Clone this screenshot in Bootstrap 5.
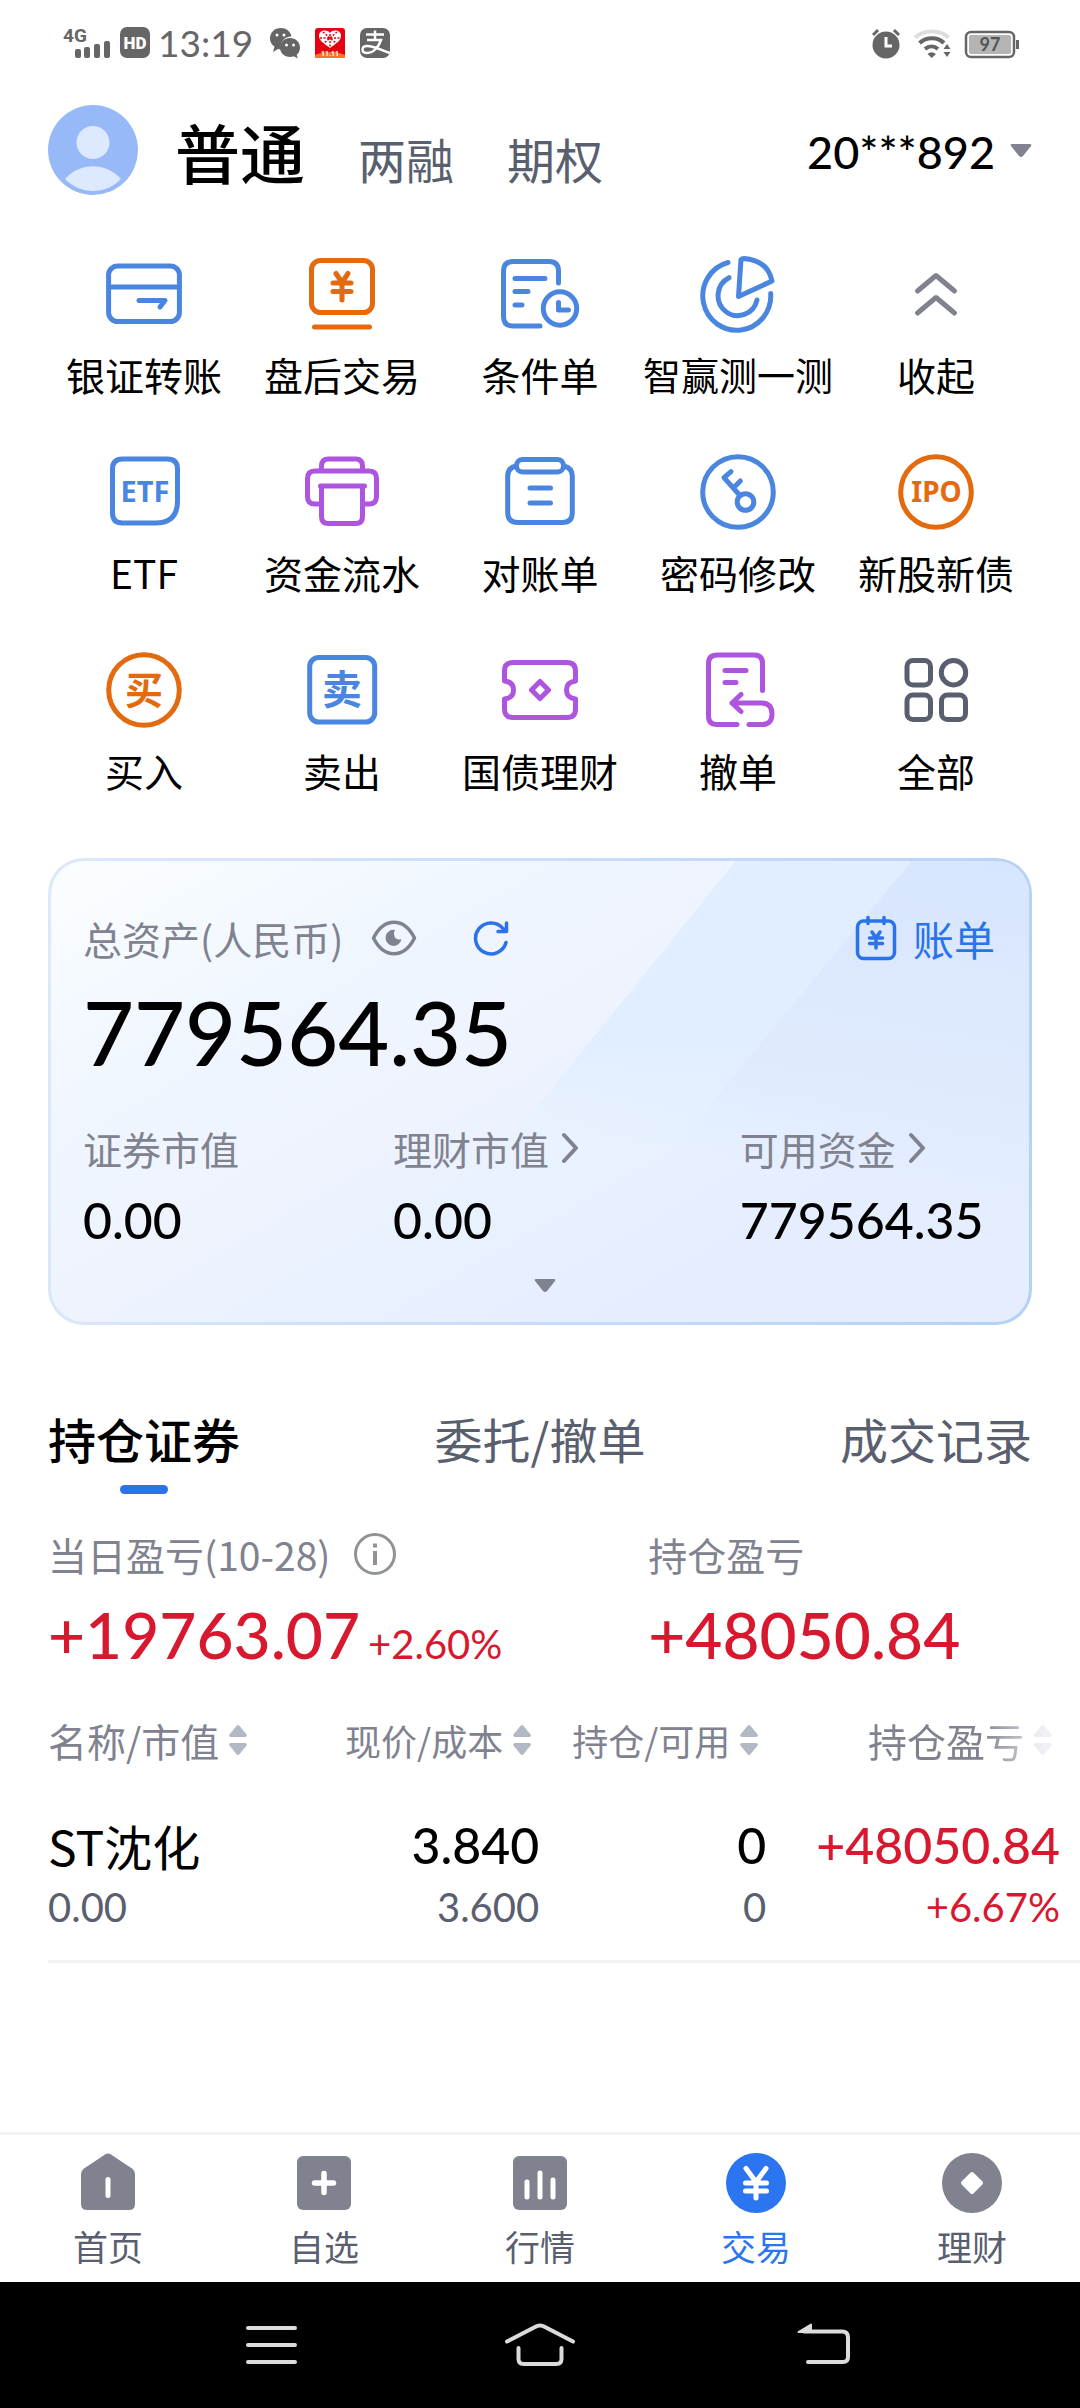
<!DOCTYPE html>
<html lang="zh-CN">
<head>
<meta charset="utf-8">
<meta name="viewport" content="width=device-width, initial-scale=1">
<title>交易</title>
<link href="https://cdn.jsdelivr.net/npm/bootstrap@5.3.0/dist/css/bootstrap.min.css" rel="stylesheet">
<style>
:root{--ink:#000;--slate:#5a5f70;--mute:#80838f;--blue:#2b73ea;--line:#4a86e0;--orange:#e46a10;--purple:#ae55e0;--red:#d7182f}
body{font-family:"Noto Sans CJK SC",sans-serif;font-size:39px;line-height:52px;color:var(--ink);background:#fff}
svg{display:block;flex:none}
a,button{color:inherit;text-decoration:none}
button{border:0;background:none;padding:0;text-align:inherit}
.digits{font-family:Lato,"Noto Sans CJK SC",sans-serif}
.ink-mute{color:var(--mute)}
.ink-slate{color:var(--slate)}
.ink-red{color:var(--red)}
.ic{fill:none;stroke:currentColor;stroke-width:5;stroke-linecap:round;stroke-linejoin:round}
.ic text{fill:currentColor;stroke:none;text-anchor:middle}
.c-line{color:var(--line)}.c-orange{color:var(--orange)}.c-purple{color:var(--purple)}

.statusbar{height:86px;padding:0 60px 0 62px;color:#666}
.clock{font-size:37px;line-height:44px}
.gutter{padding-left:48px;padding-right:48px}
.topbar{padding-top:19px}
.topbar nav{gap:53px;margin-left:37px}
.mode{font-size:48px;line-height:72px;color:var(--slate)}
.mode.active{font-size:65px;font-weight:500;color:var(--ink)}
.account{font-size:45px;line-height:60px;gap:15px;font-weight:500}

.tools{padding:56px 45px 0}
.tool{padding-bottom:49px}
.tool a{gap:13px}
.tool .snug{font-size:38px}

.assets{margin:13px 48px 0;padding:51px 34px 29px;border:3px solid transparent;border-radius:36px;position:relative;overflow:hidden;
 background:linear-gradient(150deg,#fbfeff 0%,#f0f6ff 26%,#eef3fe 46%,#e7f1ff 62%,#e4eeff 76%) padding-box,linear-gradient(100deg,#dce9fa,#b5d0f6) border-box}
.assets::before,.assets::after{content:"";position:absolute;inset:0;z-index:0}
.assets::before{background:linear-gradient(#e0eeff,#e1eeff 40%,rgba(228,238,255,0) 62%);clip-path:polygon(70% 0,100% 0,100% 100%,32% 100%)}
.assets::after{background:linear-gradient(190deg,#d7e6ff,#dfeafd 36%,rgba(228,238,255,0) 56%);clip-path:polygon(88% 0,100% 0,100% 100%,49% 100%)}
.assets>*{position:relative;z-index:1}
.assets>div{margin-left:-2px}
.total{font-size:88px;line-height:104px;margin-top:16px;font-weight:500}
.bill{font-size:41px;color:var(--blue);gap:16px}
.splits{margin-top:38px}
.splits a{gap:13px}
.amt{font-size:50px;line-height:60px;font-weight:500}
.splits .amt{margin-top:16px}
.w-a{width:34%}.w-b{width:38%}.w-c{width:28%}
.more{margin-top:29px;padding-left:12px}

.views{margin-top:81px;font-size:48px;line-height:64px;color:var(--slate)}
.views .active{color:var(--ink);font-weight:500}
.views .active::after{content:"";display:block;width:48px;height:9px;margin:15px auto 0;border-radius:5px;background:var(--blue)}
.pnl{margin-top:34px}
.pnl-a{width:61%}
.pnl-val{font-size:64px;line-height:76px;margin-top:17px;font-weight:500}
.pct{font-size:40px;line-height:40px;font-weight:400}
.holdings{margin-top:41px;padding-left:48px}
.holdings table{table-layout:fixed;border-bottom:3px solid #f2f2f4}
.holdings th{font-weight:400;color:var(--mute);padding:0 8px 49px 0}
.holdings td{padding:0 0 27px;vertical-align:top}
.holdings th:last-child{padding-right:28px}
.holdings td:last-child{padding-right:20px}
.sort{gap:10px}
.tight{font-size:36px}
.fading{-webkit-mask-image:linear-gradient(90deg,#000 62%,rgba(0,0,0,.2) 96%);mask-image:linear-gradient(90deg,#000 62%,rgba(0,0,0,.2) 96%)}
.stock{font-size:48px;line-height:60px}
.sub{font-size:40px;line-height:52px;margin-top:6px}

.tabbar{border-top:3px solid #f2f3f7;padding:18px 0 13px;font-size:35px;line-height:46px;color:var(--slate)}
.tabbar a{gap:10px}
.tabbar svg{color:var(--mute)}
.tabbar .active,.tabbar .active svg{color:#2b76f0}
.syskeys{height:126px;padding:0 21.3%;background:#000;color:#dcdcdc}
</style>
</head>
<body class="d-flex flex-column min-vh-100">

<div class="statusbar d-flex align-items-center justify-content-between">
  <div class="d-flex align-items-center">
    <svg width="92" height="46" viewBox="0 -6 92 46" fill="currentColor" aria-hidden="true">
      <text x="1" y="16" font-family="Roboto,sans-serif" font-weight="700" font-size="19">4G</text>
      <rect x="13" y="23" width="6" height="9" rx="2"/><rect x="22" y="21" width="6" height="11" rx="2"/><rect x="32" y="18" width="6" height="14" rx="2"/><rect x="42" y="15" width="6" height="17" rx="2"/>
      <rect x="58" y="1" width="30" height="31" rx="7"/>
      <text x="73" y="23" font-family="Roboto,sans-serif" font-weight="900" font-size="17" text-anchor="middle" fill="#fff">HD</text>
    </svg>
    <span class="clock digits ms-1 me-3">13:19</span>
    <svg width="124" height="34" viewBox="0 0 124 34" fill="currentColor" aria-hidden="true">
      <path d="M12 2C5 2 1 7 1 12.500c0 3.500 1.500 6 4.500 8L4 26l5-3c1 .3 2 .4 3 .4C10 15 17 10 22.500 10.500 21.500 5 17 2 12 2z"/>
      <path d="M21 12c-5.500 0-10 4-10 9.500S15.500 31 21 31c1.300 0 2.600-.3 3.700-.7l4 2.200-1-3.700c2-1.600 3.300-4 3.300-7.300C31 16 26.500 12 21 12z"/>
      <g fill="#fff"><circle cx="8" cy="9" r="1.500"/><circle cx="15" cy="9" r="1.500"/><circle cx="17.500" cy="19" r="1.500"/><circle cx="24.500" cy="19" r="1.500"/></g>
      <rect x="46" y="2" width="30" height="30" rx="3" fill="#e60012"/>
      <path d="M46 29c9-4 21-4 30 0v3H46z" fill="#f27a2a"/>
      <path d="M61 7c-3-4-11-3-11 3 0 5 6 8 11 12 5-4 11-7 11-12 0-6-8-7-11-3z" fill="#fff"/>
      <path d="M54 6l14 12M68 6L54 18M61 8v13M51 12h20" stroke="#e60012" stroke-width="1.500" stroke-dasharray="2 1.500" fill="none"/>
      <text x="61" y="30" font-family="Roboto,sans-serif" font-weight="700" font-size="7" text-anchor="middle" fill="#fff">11.11</text>
      <rect x="91" y="2" width="30" height="30" rx="7"/>
      <path d="M97 8.500h18M106 4.500v9M98 14h14c-2 6-7 13-14 13-6 0-6-7 0-7 7 0 14 4 23 7" fill="none" stroke="#fff" stroke-width="2.500"/>
    </svg>
  </div>
  <svg width="148" height="34" viewBox="0 0 148 34" aria-hidden="true">
    <circle cx="14" cy="19" r="13.500" fill="#666"/>
    <path d="M14 11v9h6" fill="none" stroke="#fff" stroke-width="3"/>
    <path d="M1 9l5-5M27 9l-5-5" stroke="#666" stroke-width="3"/>
    <g fill="none" stroke="#666" stroke-width="4"><path d="M43 11.500c9-8 25-8 33.500 0" stroke="#ddd"/><path d="M47.500 17c7-6.500 18-6.500 24.500 0"/><path d="M53 23c4-3.500 9-3.500 13 0"/></g>
    <path d="M55.500 28q4-3.500 8.500 0l-4.300 4zM71.500 23l3.500-5 3.500 5zM71.500 26h7l-3.500 5z" fill="#666"/>
    <rect x="94" y="6" width="48" height="25" rx="5" fill="#fff" stroke="#666" stroke-width="2.500"/>
    <rect x="97" y="9" width="42" height="19" rx="2" fill="#b4b4b4"/>
    <rect x="144" y="14" width="3" height="9" fill="#666"/>
    <text x="118" y="25" font-family="Lato,sans-serif" font-weight="700" font-size="18" text-anchor="middle" fill="#555">97</text>
  </svg>
</div>

<header class="topbar gutter d-flex align-items-center">
  <svg width="90" height="90" viewBox="0 0 90 90" role="img" aria-label="头像">
    <circle cx="45" cy="45" r="45" fill="#98b9f8"/><circle cx="45" cy="37.500" r="16.500" fill="#dce9ff"/>
    <path d="M17 74c15-17 41-17 56 0-15 16-41 16-56 0z" fill="#dce9ff"/>
  </svg>
  <nav class="d-flex align-items-baseline pt-2">
    <a href="#" class="mode active">普通</a>
    <a href="#" class="mode">两融</a>
    <a href="#" class="mode">期权</a>
  </nav>
  <button type="button" class="account digits d-flex align-items-center ms-auto pt-1">20***892
    <svg width="22" height="16" viewBox="0 0 22 16" fill="#80838f" aria-hidden="true"><path d="M2 0h18q2 0 1 2l-8 10q-2 2-4 0L1 2q-1-2 1-2z"/></svg>
  </button>
</header>

<section class="tools row row-cols-5 g-0 text-center text-nowrap">
  <div class="col tool"><a href="#" class="d-flex flex-column align-items-center">
    <svg class="ic c-line" width="84" height="84" viewBox="0 0 84 84"><rect x="6.600" y="15" width="70.800" height="55.500" rx="9"/><path d="M7 36h70M37 49.500h26l-5 6.500"/></svg>银证转账</a></div>
  <div class="col tool"><a href="#" class="d-flex flex-column align-items-center">
    <svg class="ic c-orange" width="84" height="84" viewBox="0 0 84 84"><rect x="11.500" y="9.500" width="61" height="52" rx="9"/><path d="M14.500 76h55M36 22.500l6 9 6-9M42 31.500V49M33 32h18M33 40.500h18"/></svg>盘后交易</a></div>
  <div class="col tool"><a href="#" class="d-flex flex-column align-items-center">
    <svg class="ic c-line" width="84" height="84" viewBox="0 0 84 84"><path d="M42 75H15q-9.500 0-9.500-9.500V20q0-9.500 9.500-9.500h36q9.500 0 9.500 9.500v12M17 27.500h30M17 40.500h13M17 54h7M60.500 51.500V59h10"/><circle cx="62" cy="57.500" r="16.700"/></svg>条件单</a></div>
  <div class="col tool"><a href="#" class="snug d-flex flex-column align-items-center">
    <svg class="ic c-line" width="84" height="84" viewBox="0 0 84 84"><path d="M42.500 45.500L45 8.500q1-1 3-1 24 2 28 22.500zM32 11.500A34 34.500 0 1 0 74.700 42.500M33 26.700A19.700 20 0 1 0 61 49"/></svg>智赢测一测</a></div>
  <div class="col tool"><a href="#" class="d-flex flex-column align-items-center">
    <svg class="ic ink-mute" width="84" height="84" viewBox="0 0 84 84"><path d="M23.500 40L42 24.500 60.500 40M23.500 62L42 46.500 60.500 62"/></svg>收起</a></div>

  <div class="col tool"><a href="#" class="d-flex flex-column align-items-center">
    <svg class="ic c-line" width="84" height="84" viewBox="0 0 84 84"><path d="M20.500 10h45q10 0 10 10v32q0 22-22 22h-33q-10 0-10-10V20q0-10 10-10z"/><text x="43" y="53" font-family="'Noto Sans',sans-serif" font-weight="700" font-size="29">ETF</text></svg>ETF</a></div>
  <div class="col tool"><a href="#" class="d-flex flex-column align-items-center">
    <svg class="ic c-purple" width="84" height="84" viewBox="0 0 84 84"><path d="M21.500 22v-5q0-7 7-7h27q7 0 7 7v5M21 55h-6q-7.500 0-7.500-7.500v-18q0-7.500 7.500-7.500h54q7.500 0 7.500 7.500v18q0 7.500-7.500 7.500h-6M20.500 37h44M21.500 37v30.500q0 7 7 7h27q7 0 7-7V37"/></svg>资金流水</a></div>
  <div class="col tool"><a href="#" class="d-flex flex-column align-items-center">
    <svg class="ic c-line" width="84" height="84" viewBox="0 0 84 84"><rect x="18.500" y="10.500" width="47" height="12.500" rx="6"/><path d="M18 17q-8.300 2-8.300 10v36.500q0 10 10 10h44.600q10 0 10-10V27q0-8-8.300-10M32 39h20.500M32 54h20.500"/></svg>对账单</a></div>
  <div class="col tool"><a href="#" class="d-flex flex-column align-items-center">
    <svg class="ic c-line" width="84" height="84" viewBox="0 0 84 84"><circle cx="42" cy="43" r="35.300"/><circle cx="49.500" cy="53" r="8.300"/><path d="M43.500 46L28 28.700l7-6M38.300 38l6-6"/></svg>密码修改</a></div>
  <div class="col tool"><a href="#" class="d-flex flex-column align-items-center">
    <svg class="ic c-orange" width="84" height="84" viewBox="0 0 84 84"><circle cx="42" cy="43" r="35.300"/><text x="42.500" y="53" font-family="'Noto Sans',sans-serif" font-weight="700" font-size="28">IPO</text></svg>新股新债</a></div>

  <div class="col tool"><a href="#" class="d-flex flex-column align-items-center">
    <svg class="ic c-orange" width="84" height="84" viewBox="0 0 84 84"><circle cx="42" cy="43" r="35.300"/><text x="42" y="57" font-family="'Noto Sans CJK SC',sans-serif" font-weight="700" font-size="38">买</text></svg>买入</a></div>
  <div class="col tool"><a href="#" class="d-flex flex-column align-items-center">
    <svg class="ic c-line" width="84" height="84" viewBox="0 0 84 84"><rect x="9.700" y="10.500" width="65" height="64.500" rx="9"/><text x="42" y="57" font-family="'Noto Sans CJK SC',sans-serif" font-weight="700" font-size="40">卖</text></svg>卖出</a></div>
  <div class="col tool"><a href="#" class="d-flex flex-column align-items-center">
    <svg class="ic c-purple" width="84" height="84" viewBox="0 0 84 84"><path d="M15 15.500h54q8.500 0 8.500 8.500v10q-9 1-9 9t9 9v10q0 8.500-8.500 8.500H15q-8.500 0-8.500-8.500V52q9-1 9-9t-9-9V24q0-8.500 8.500-8.500zM42 34.500l8.500 8.500-8.500 8.500-8.500-8.500z"/></svg>国债理财</a></div>
  <div class="col tool"><a href="#" class="d-flex flex-column align-items-center">
    <svg class="ic c-purple" width="84" height="84" viewBox="0 0 84 84"><path d="M41 77.500H21q-8.500 0-8.500-8.500V16.500Q12.500 8 21 8h37q8.500 0 8.500 8.500v27M29 23.500h21M29 35.500h11M45 47.500l-9 8.500 9 8.500M36 56h29q11 0 11 11t-11 10.500H53"/></svg>撤单</a></div>
  <div class="col tool"><a href="#" class="d-flex flex-column align-items-center">
    <svg class="ic ink-slate" width="84" height="84" viewBox="0 0 84 84"><rect x="13" y="13.500" width="23.500" height="24.500" rx="6"/><circle cx="59.500" cy="25.700" r="12.200"/><rect x="13" y="48" width="23.500" height="24.500" rx="6"/><rect x="47.500" y="48" width="24" height="24.500" rx="6"/></svg>全部</a></div>
</section>

<section class="assets">
  <div class="d-flex align-items-center">
    <span class="ink-mute">总资产(人民币)</span>
    <button type="button" class="ink-mute ms-4 ps-1" aria-label="隐藏金额">
      <svg width="46" height="36" viewBox="0 0 46 36"><path d="M2.500 18C13-3 33-3 43.500 18 33 39 13 39 2.500 18z" fill="none" stroke="currentColor" stroke-width="3.500" stroke-linejoin="round"/><path d="M24 10a8 8 0 1 0 6.500 9q-4 1.500-6.500-1.500-2-4 0-7.500z" fill="currentColor"/></svg></button>
    <button type="button" class="ms-5 ps-2" aria-label="刷新">
      <svg width="36" height="36" viewBox="0 0 36 36" fill="none" stroke="#2b73ea" stroke-width="3.500" stroke-linecap="round" stroke-linejoin="round"><path d="M33 22.500A15.500 15.500 0 1 1 30 8.500l2 2M33.500 3v8.500H25"/></svg></button>
    <a href="#" class="bill d-flex align-items-center ms-auto">
      <svg width="42" height="46" viewBox="0 0 42 46" fill="none" stroke="currentColor" stroke-width="3.500" stroke-linecap="round" stroke-linejoin="round"><rect x="2.500" y="6" width="37" height="37.500" rx="6"/><path d="M13 2.500v6M29 2.500v6M17 17l4 6 4-6M21 23v10M14.500 23h13M14.500 28.500h13"/></svg>账单</a>
  </div>
  <div class="total digits">779564.35</div>
  <div class="splits d-flex">
    <div class="w-a"><div class="ink-mute">证券市值</div><div class="amt digits">0.00</div></div>
    <div class="w-b"><a href="#" class="ink-mute d-flex align-items-center">理财市值<svg width="16" height="32" viewBox="0 0 16 32" fill="none" stroke="currentColor" stroke-width="4" stroke-linecap="round" stroke-linejoin="round"><path d="M2 3l12 13L2 29"/></svg></a><div class="amt digits">0.00</div></div>
    <div class="w-c"><a href="#" class="ink-mute d-flex align-items-center">可用资金<svg width="16" height="32" viewBox="0 0 16 32" fill="none" stroke="currentColor" stroke-width="4" stroke-linecap="round" stroke-linejoin="round"><path d="M2 3l12 13L2 29"/></svg></a><div class="amt digits">779564.35</div></div>
  </div>
  <div class="more d-flex justify-content-center"><button type="button" aria-label="展开"><svg width="22" height="14" viewBox="0 0 22 14" fill="#80838f"><path d="M2 0h18q2 0 1 2l-8 10q-2 2-4 0L1 2q-1-2 1-2z"/></svg></button></div>
</section>

<main class="flex-grow-1">
  <nav class="views gutter d-flex justify-content-between">
    <a href="#" class="active">持仓证券</a><a href="#">委托/撤单</a><a href="#">成交记录</a>
  </nav>
  <section class="pnl gutter d-flex">
    <div class="pnl-a">
      <div class="ink-mute d-flex align-items-center">当日盈亏(10-28)
        <svg class="ms-4" width="42" height="42" viewBox="0 0 42 42" fill="none" stroke="#8f9394" stroke-width="3"><circle cx="21" cy="21" r="19.500"/><path d="M21 18v14M21 10.500v4" stroke-width="4"/></svg></div>
      <div class="pnl-val digits ink-red">+19763.07<span class="pct ms-2">+2.60%</span></div>
    </div>
    <div>
      <div class="ink-mute">持仓盈亏</div>
      <div class="pnl-val digits ink-red">+48050.84</div>
    </div>
  </section>
  <section class="holdings">
    <table class="w-100 text-nowrap">
      <colgroup><col style="width:26%"><col style="width:21.600%"><col style="width:22%"><col></colgroup>
      <thead><tr>
        <th scope="col"><button type="button" class="sort d-inline-flex align-items-center align-top">名称/市值<svg width="18" height="30" viewBox="0 0 18 30" fill="#b3b9c4"><path d="M9 0q1 0 2 1.500l7 8.500q0 2-2 2H2q-2 0-2-2l7-8.500Q8 0 9 0zM9 30q1 0 2-1.500l7-8.500q0-2-2-2H2q-2 0-2 2l7 8.500Q8 30 9 30z"/></svg></button></th>
        <th scope="col" class="text-end"><button type="button" class="sort tight d-inline-flex align-items-center align-top">现价/成本<svg width="18" height="30" viewBox="0 0 18 30" fill="#b3b9c4"><path d="M9 0q1 0 2 1.500l7 8.500q0 2-2 2H2q-2 0-2-2l7-8.500Q8 0 9 0zM9 30q1 0 2-1.500l7-8.500q0-2-2-2H2q-2 0-2 2l7 8.500Q8 30 9 30z"/></svg></button></th>
        <th scope="col" class="text-end"><button type="button" class="sort tight d-inline-flex align-items-center align-top">持仓/可用<svg width="18" height="30" viewBox="0 0 18 30" fill="#b3b9c4"><path d="M9 0q1 0 2 1.500l7 8.500q0 2-2 2H2q-2 0-2-2l7-8.500Q8 0 9 0zM9 30q1 0 2-1.500l7-8.500q0-2-2-2H2q-2 0-2 2l7 8.500Q8 30 9 30z"/></svg></button></th>
        <th scope="col" class="text-end"><button type="button" class="sort fading d-inline-flex align-items-center align-top">持仓盈亏<svg width="18" height="30" viewBox="0 0 18 30" fill="#b3b9c4"><path d="M9 0q1 0 2 1.500l7 8.500q0 2-2 2H2q-2 0-2-2l7-8.500Q8 0 9 0zM9 30q1 0 2-1.500l7-8.500q0-2-2-2H2q-2 0-2 2l7 8.500Q8 30 9 30z"/></svg></button></th>
      </tr></thead>
      <tbody><tr>
        <td><div class="stock">ST沈化</div><div class="sub digits ink-slate">0.00</div></td>
        <td class="text-end digits"><div class="amt">3.840</div><div class="sub ink-slate">3.600</div></td>
        <td class="text-end digits"><div class="amt">0</div><div class="sub ink-slate">0</div></td>
        <td class="text-end digits ink-red"><div class="amt">+48050.84</div><div class="sub">+6.67%</div></td>
      </tr></tbody>
    </table>
  </section>
</main>

<nav class="tabbar row row-cols-5 g-0 text-center">
  <div class="col"><a href="#" class="d-flex flex-column align-items-center">
    <svg width="60" height="60" viewBox="0 0 60 60" fill="currentColor"><path d="M27 1.500q3-2 6 0l21 14q3 2 3 6V51q0 6-6 6H9q-6 0-6-6V21.500q0-4 3-6z"/><rect x="27.500" y="24" width="5" height="21" rx="2.500" fill="#fff"/></svg>首页</a></div>
  <div class="col"><a href="#" class="d-flex flex-column align-items-center">
    <svg width="60" height="60" viewBox="0 0 60 60" fill="currentColor"><rect x="3" y="3" width="54" height="54" rx="6"/><path d="M30 20.500v19M20.500 30h19" stroke="#fff" stroke-width="5.500" stroke-linecap="round"/></svg>自选</a></div>
  <div class="col"><a href="#" class="d-flex flex-column align-items-center">
    <svg width="60" height="60" viewBox="0 0 60 60" fill="currentColor"><rect x="3" y="3" width="54" height="54" rx="6"/><path d="M17 29v15M30 20v24M43 27v17" stroke="#fff" stroke-width="5" stroke-linecap="round"/></svg>行情</a></div>
  <div class="col"><a href="#" class="active d-flex flex-column align-items-center">
    <svg width="60" height="60" viewBox="0 0 60 60" fill="currentColor"><circle cx="30" cy="30" r="30"/><path d="M20 15.500L30 29l10-13.500M30 29v16M19.500 30h21M19.500 38h21" fill="none" stroke="#fff" stroke-width="5" stroke-linecap="round" stroke-linejoin="round"/></svg>交易</a></div>
  <div class="col"><a href="#" class="d-flex flex-column align-items-center">
    <svg width="60" height="60" viewBox="0 0 60 60" fill="currentColor"><circle cx="30" cy="30" r="30"/><path d="M30 21l9 9-9 9-9-9z" fill="#fff" stroke="#fff" stroke-width="4" stroke-linejoin="round"/></svg>理财</a></div>
</nav>

<div class="syskeys d-flex align-items-center justify-content-between">
  <button type="button" aria-label="菜单"><svg width="80" height="44" viewBox="-15 0 80 44" fill="none" stroke="currentColor" stroke-width="4" stroke-linecap="round"><path d="M3 5h47M3 22h47M3 39h47"/></svg></button>
  <button type="button" aria-label="主页"><svg width="80" height="44" viewBox="-4 0 80 44" fill="none" stroke="currentColor" stroke-width="4" stroke-linecap="round" stroke-linejoin="round"><path d="M3 18.500L31 4q5-3 10 0l28 14.500M14.500 25v11q0 5 5 5h33q5 0 5-5V25"/></svg></button>
  <button type="button" aria-label="返回"><svg width="80" height="44" viewBox="-10 0 80 44" fill="none" stroke="currentColor" stroke-width="4" stroke-linecap="round" stroke-linejoin="round"><path d="M24 8.500h38q6 0 6 6V34q0 5-5 5H28"/><path d="M18.500 9L31 1.500V9z" fill="currentColor" stroke-width="2"/></svg></button>
</div>

<script src="https://cdn.jsdelivr.net/npm/bootstrap@5.3.0/dist/js/bootstrap.bundle.min.js"></script>
</body>
</html>
